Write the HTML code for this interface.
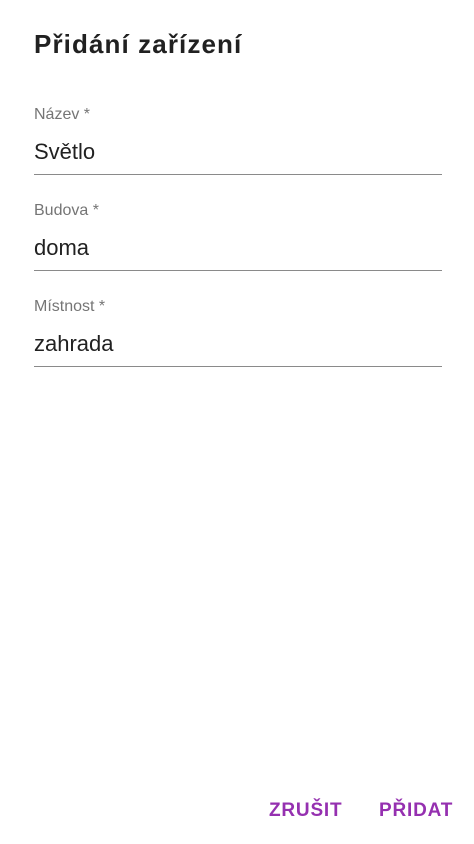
<!DOCTYPE html>
<html><head><meta charset="utf-8"><style>
body{margin:0;width:474px;height:844px;background:#fff;font-family:"Liberation Sans",sans-serif;position:relative;overflow:hidden}
.t{position:absolute;left:34px;top:29px;font-size:26px;font-weight:bold;color:#212121;letter-spacing:1.1px}
.l{position:absolute;left:34px;font-size:16px;color:#757575}
.v{position:absolute;left:34px;font-size:22px;color:#212121}
.u{position:absolute;left:34px;width:408px;height:1px;background:#8a8a8a}
.b{position:absolute;top:800px;font-size:19px;font-weight:bold;color:#9530b0;letter-spacing:0.8px}
</style></head><body>
<div class="t">Přidání zařízení</div>
<div class="l" style="top:106px">Název *</div>
<div class="v" style="top:139px">Světlo</div>
<div class="u" style="top:174px"></div>
<div class="l" style="top:202px">Budova *</div>
<div class="v" style="top:235px">doma</div>
<div class="u" style="top:270px"></div>
<div class="l" style="top:298px">Místnost *</div>
<div class="v" style="top:331px">zahrada</div>
<div class="u" style="top:366px"></div>
<div class="b" style="left:269px">ZRUŠIT</div>
<div class="b" style="left:379px">PŘIDAT</div>
</body></html>
